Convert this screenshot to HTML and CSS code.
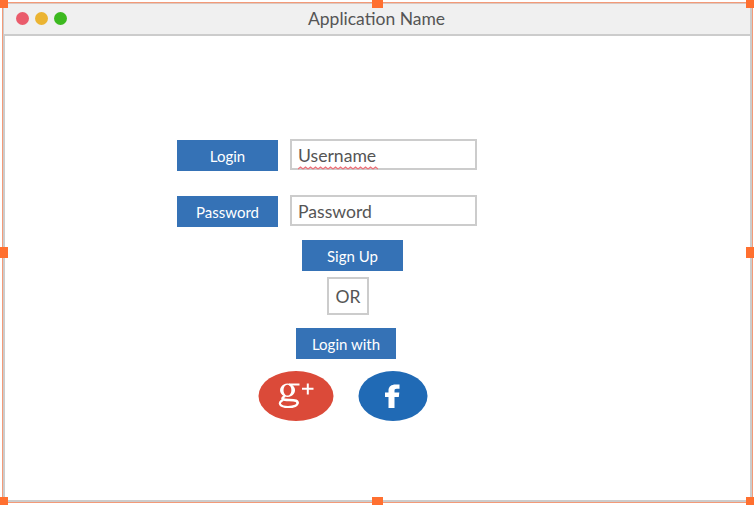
FILE: index.html
```html
<!DOCTYPE html>
<html lang="en">
<head>
<meta charset="utf-8">
<title>Application Name</title>
<link rel="stylesheet" href="styles.css">
</head>
<body>
<div class="selection">
  <main class="window">
    <header class="titlebar">
      <div class="lights"><i class="light red"></i><i class="light yellow"></i><i class="light green"></i></div>
      <h1 class="title">Application Name</h1>
    </header>
    <section class="form">
      <div class="row">
        <div class="button">Login</div>
        <div class="field">Username
          <svg class="squiggle" width="80" height="4" viewBox="0 0 80 4"><defs><pattern id="wave" width="5" height="4" patternUnits="userSpaceOnUse"><path d="M0 3 L2.5 1 L5 3" fill="none" stroke="#ee7078" stroke-width="1.3"/></pattern></defs><rect width="80" height="4" fill="url(#wave)"/></svg>
        </div>
      </div>
      <div class="row">
        <div class="button">Password</div>
        <div class="field">Password</div>
      </div>
      <div class="button signup">Sign Up</div>
      <div class="or">OR</div>
      <div class="button with">Login with</div>
      <div class="social">
        <svg width="76" height="50" viewBox="0 0 76 50">
          <ellipse cx="38" cy="25" rx="37.5" ry="25" fill="#db4a39"/>
          <g fill="none" stroke="#fff">
            <path fill="#fff" fill-rule="evenodd" stroke="none" d="M29.5 12.5 a7.5 6.7 0 1 0 .1 0 Z M29.5 13.8 a3.9 5.4 0 1 1 -.1 0 Z"/>
            <path d="M31 13.5 H41.5" stroke-width="2"/>
            <path d="M27 25 C22 28 25 29 31 29 C38 29 40 30 39.5 32.5" stroke-width="2.6"/>
            <path d="M25 29 C19 32 22 36 30 36 C36 36 40 34.5 39.5 31.5" stroke-width="2.2"/>
            <path d="M44 17.8 H55.5 M49.8 12.5 V23.5" stroke-width="2"/>
          </g>
        </svg>
        <svg width="70" height="50" viewBox="0 0 70 50">
          <ellipse cx="35" cy="25" rx="34.5" ry="25" fill="#206ab5"/>
          <path d="M30.5 37 V26 H27 V21.5 H30.5 V19.5 C30.5 15.5 33.5 13.5 37.5 13.5 H41.5 V17.8 H38.8 C36.8 17.8 36.5 18.6 36.5 20 V21.5 H41.3 L40.8 26 H36.5 V37 Z" fill="#fff"/>
        </svg>
      </div>
    </section>
  </main>
  <i class="handle top left"></i><i class="handle top center"></i><i class="handle top right"></i>
  <i class="handle middle left"></i><i class="handle middle right"></i>
  <i class="handle bottom left"></i><i class="handle bottom center"></i><i class="handle bottom right"></i>
</div>
</body>
</html>
```
FILE: styles.css
```css
* { box-sizing: border-box; }
body { margin: 0; background: #fff; font-family: Lato, sans-serif; color: #555; overflow: hidden; }
.selection { position: relative; width: 754px; height: 505px; padding: 2px 1px 2px 2px; }
.window { height: 501px; border: 1px solid #f39a78; background: #fff; box-shadow: inset 0 0 0 2px #ccc; }
.titlebar { display: flex; align-items: center; height: 33px; margin: 0 2px 0 1px; padding-left: 12px; background: #f0f0f0; border-top: 1px solid #dcc8c0; border-bottom: 2px solid #ccc; }
.lights { display: flex; gap: 6px; width: 292px; margin-top: -1px; }
.light { width: 13px; height: 13px; border-radius: 50%; }
.red { background: #ea5c6c; }
.yellow { background: #ebb432; }
.green { background: #3cb91f; }
.title { margin: 0; font-size: 17.5px; font-weight: 400; line-height: 22px; white-space: nowrap; }
.form { padding: 104px 0 0 174px; }
.row { display: flex; gap: 12px; height: 31px; margin-bottom: 25px; }
.button { display: flex; align-items: center; justify-content: center; width: 101px; height: 31px; padding-top: 1px; background: #3572b6; color: #fff; font-size: 15px; }
.field { position: relative; width: 187px; height: 31px; padding: 0 6px; border: 2px solid #ccc; font-size: 17.6px; line-height: 29px; }
.row .field { margin-top: -0.6px; }
.squiggle { position: absolute; left: 6px; bottom: -2px; }
.signup { margin: -12px 0 0 125px; }
.or { width: 42px; height: 38px; margin: 6px 0 0 150px; border: 2px solid #ccc; font-size: 17.5px; line-height: 36px; text-align: center; }
.with { width: 100px; margin: 13px 0 0 119px; padding-top: 0; }
.social { display: flex; gap: 24px; margin: 12px 0 0 81px; }
.handle { position: absolute; width: 8px; height: 11px; background: #ff7030; }
.top { top: -3px; }
.middle { top: 247px; }
.bottom { top: 497px; }
.left { left: 0; }
.right { right: 0; }
.center { left: 372px; width: 11px; }
```
